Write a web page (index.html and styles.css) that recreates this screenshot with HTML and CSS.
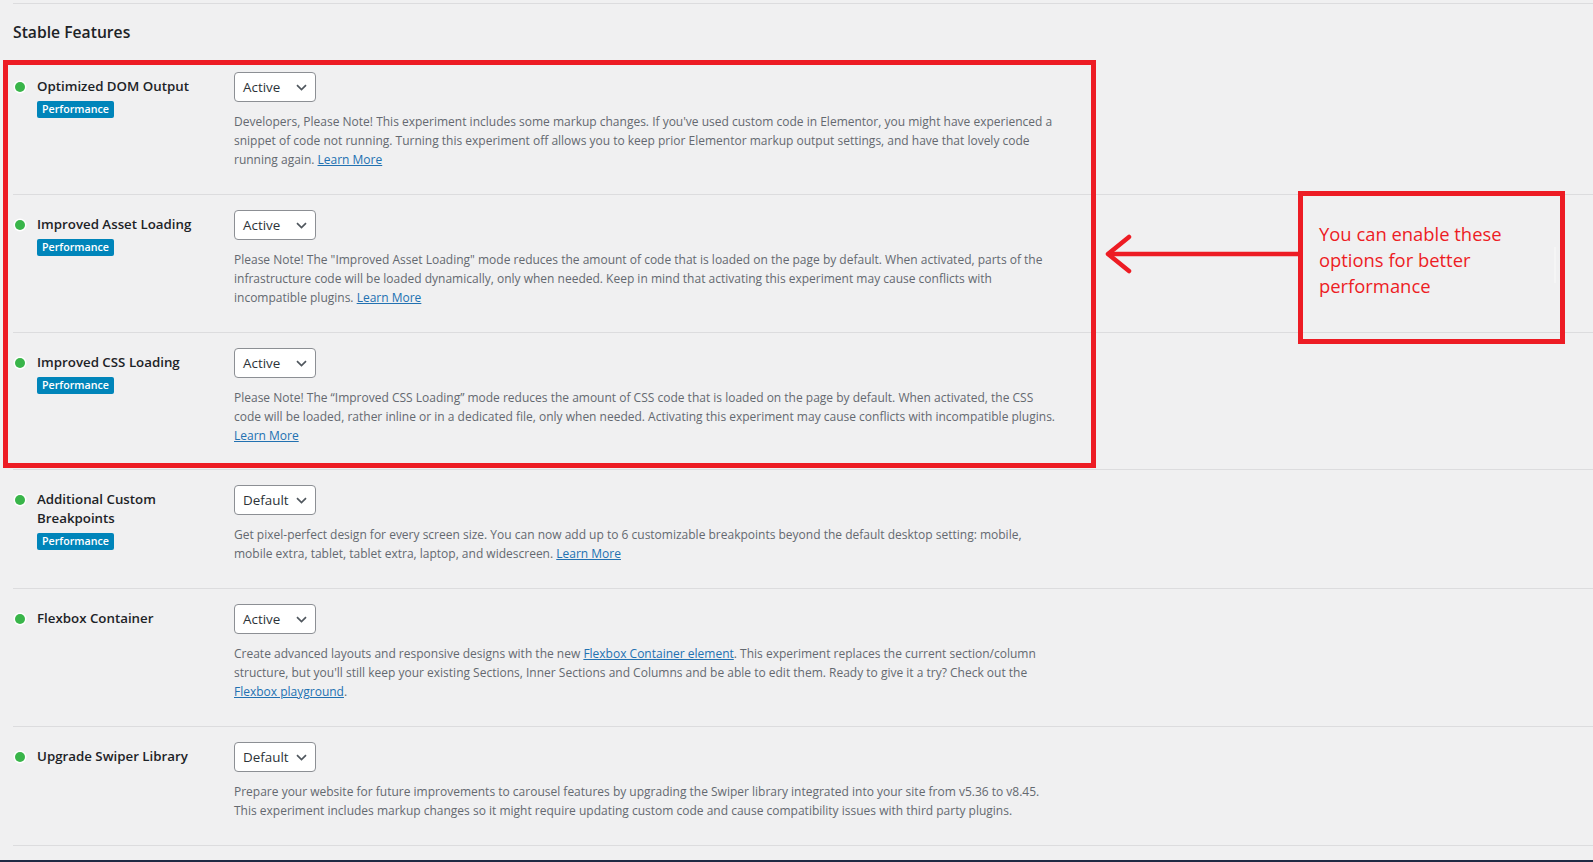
FILE: index.html
```html
<!DOCTYPE html>
<html lang="en">
<head>
<meta charset="utf-8">
<title>Stable Features</title>
<link rel="stylesheet" href="styles.css">
</head>
<body>
<div class="page">
  <div class="top-rule"></div>
  <h2 class="section-title">Stable Features</h2>

  <div class="features">
    <div class="feature">
      <div class="feature-label">
        <span class="dot"></span>
        <div class="label-text">
          <div class="name">Optimized DOM Output</div>
          <span class="tag">Performance</span>
        </div>
      </div>
      <div class="feature-control">
        <div class="select"><span class="select-value">Active</span><svg class="chev" width="11" height="7" viewBox="0 0 11 7"><path d="M1 1.2 L5.5 5.5 L10 1.2" fill="none" stroke="#50575e" stroke-width="1.7"/></svg></div>
        <p class="desc">Developers, Please Note! This experiment includes some markup changes. If you've used custom code in Elementor, you might have experienced a<br>snippet of code not running. Turning this experiment off allows you to keep prior Elementor markup output settings, and have that lovely code<br>running again. <a href="#">Learn More</a></p>
      </div>
    </div>

    <div class="feature">
      <div class="feature-label">
        <span class="dot"></span>
        <div class="label-text">
          <div class="name">Improved Asset Loading</div>
          <span class="tag">Performance</span>
        </div>
      </div>
      <div class="feature-control">
        <div class="select"><span class="select-value">Active</span><svg class="chev" width="11" height="7" viewBox="0 0 11 7"><path d="M1 1.2 L5.5 5.5 L10 1.2" fill="none" stroke="#50575e" stroke-width="1.7"/></svg></div>
        <p class="desc">Please Note! The "Improved Asset Loading" mode reduces the amount of code that is loaded on the page by default. When activated, parts of the<br>infrastructure code will be loaded dynamically, only when needed. Keep in mind that activating this experiment may cause conflicts with<br>incompatible plugins. <a href="#">Learn More</a></p>
      </div>
    </div>

    <div class="feature feature-tight">
      <div class="feature-label">
        <span class="dot"></span>
        <div class="label-text">
          <div class="name">Improved CSS Loading</div>
          <span class="tag">Performance</span>
        </div>
      </div>
      <div class="feature-control">
        <div class="select"><span class="select-value">Active</span><svg class="chev" width="11" height="7" viewBox="0 0 11 7"><path d="M1 1.2 L5.5 5.5 L10 1.2" fill="none" stroke="#50575e" stroke-width="1.7"/></svg></div>
        <p class="desc">Please Note! The “Improved CSS Loading” mode reduces the amount of CSS code that is loaded on the page by default. When activated, the CSS<br>code will be loaded, rather inline or in a dedicated file, only when needed. Activating this experiment may cause conflicts with incompatible plugins.<br><a href="#">Learn More</a></p>
      </div>
    </div>

    <div class="feature">
      <div class="feature-label">
        <span class="dot"></span>
        <div class="label-text">
          <div class="name">Additional Custom<br>Breakpoints</div>
          <span class="tag">Performance</span>
        </div>
      </div>
      <div class="feature-control">
        <div class="select"><span class="select-value">Default</span><svg class="chev" width="11" height="7" viewBox="0 0 11 7"><path d="M1 1.2 L5.5 5.5 L10 1.2" fill="none" stroke="#50575e" stroke-width="1.7"/></svg></div>
        <p class="desc">Get pixel-perfect design for every screen size. You can now add up to 6 customizable breakpoints beyond the default desktop setting: mobile,<br>mobile extra, tablet, tablet extra, laptop, and widescreen. <a href="#">Learn More</a></p>
      </div>
    </div>

    <div class="feature">
      <div class="feature-label">
        <span class="dot"></span>
        <div class="label-text">
          <div class="name">Flexbox Container</div>
        </div>
      </div>
      <div class="feature-control">
        <div class="select"><span class="select-value">Active</span><svg class="chev" width="11" height="7" viewBox="0 0 11 7"><path d="M1 1.2 L5.5 5.5 L10 1.2" fill="none" stroke="#50575e" stroke-width="1.7"/></svg></div>
        <p class="desc">Create advanced layouts and responsive designs with the new <a href="#">Flexbox Container element</a>. This experiment replaces the current section/column<br>structure, but you'll still keep your existing Sections, Inner Sections and Columns and be able to edit them. Ready to give it a try? Check out the<br><a href="#">Flexbox playground</a>.</p>
      </div>
    </div>

    <div class="feature">
      <div class="feature-label">
        <span class="dot"></span>
        <div class="label-text">
          <div class="name">Upgrade Swiper Library</div>
        </div>
      </div>
      <div class="feature-control">
        <div class="select"><span class="select-value">Default</span><svg class="chev" width="11" height="7" viewBox="0 0 11 7"><path d="M1 1.2 L5.5 5.5 L10 1.2" fill="none" stroke="#50575e" stroke-width="1.7"/></svg></div>
        <p class="desc">Prepare your website for future improvements to carousel features by upgrading the Swiper library integrated into your site from v5.36 to v8.45.<br>This experiment includes markup changes so it might require updating custom code and cause compatibility issues with third party plugins.</p>
      </div>
    </div>
  </div>
</div>
<div class="bottom-bar"></div>

<div class="annot-frame"></div>
<svg class="annot-arrow" width="200" height="50" viewBox="0 0 200 50">
  <path d="M8 24 H200" stroke="#ed1c24" stroke-width="4.5" fill="none"/>
  <path d="M29 7 L8 24 L29 41" stroke="#ed1c24" stroke-width="4.5" fill="none" stroke-linecap="round" stroke-linejoin="round"/>
</svg>
<div class="callout">You can enable these<br>options for better<br>performance</div>
<div class="caret"></div>
</body>
</html>
```

FILE: styles.css
```css
* { box-sizing: border-box; }

html, body {
  margin: 0;
  padding: 0;
}

body {
  background: #f0f0f1;
  font-family: "Open Sans", "Noto Sans", sans-serif;
  color: #1d2327;
  min-height: 862px;
  position: relative;
}

.page {
  padding-left: 13px;
}

.top-rule {
  margin-top: 3px;
  border-top: 1px solid #dcdcde;
}

.section-title {
  margin: 17px 0 14px;
  font-size: 15.7px;
  line-height: 22px;
  font-weight: 600;
  color: #1d2327;
}

.feature {
  display: flex;
  border-bottom: 1px solid #dcdcde;
  padding: 15px 0 25px;
}

.feature-tight {
  padding-bottom: 24px;
}

.feature-label {
  flex: 0 0 221px;
  display: flex;
  align-items: flex-start;
  gap: 12px;
  padding-top: 5px;
}

.dot {
  flex: 0 0 10px;
  width: 10px;
  height: 10px;
  margin-top: 4.5px;
  margin-left: 2px;
  border-radius: 50%;
  background: #39b54a;
  box-shadow: 0 0 0 1.5px #fff;
}

.label-text {
  display: flex;
  flex-direction: column;
  align-items: flex-start;
}

.name {
  font-size: 13.3px;
  line-height: 19px;
  font-weight: 600;
  color: #1d2327;
}

.tag {
  margin-top: 4.5px;
  background: #0085ba;
  color: #fff;
  font-size: 10.7px;
  font-weight: 600;
  line-height: 17px;
  padding: 0 5px;
  border-radius: 2px;
}

.feature-control {
  flex: 1;
}

.select {
  width: 82px;
  height: 30px;
  background: #fff;
  border: 1px solid #8c8f94;
  border-radius: 4px;
  display: flex;
  align-items: center;
  justify-content: space-between;
  padding: 0 8px 0 8px;
  font-size: 13.4px;
  color: #2c3338;
}

.chev {
  display: block;
}

.desc {
  margin: 10px 0 0;
  font-size: 12px;
  line-height: 19px;
  color: #646970;
  white-space: nowrap;
}

.desc a {
  color: #2271b1;
  text-decoration: underline;
}

.bottom-bar {
  margin-top: 14px;
  height: 2px;
  background: #1f2a44;
}

.annot-frame {
  position: absolute;
  left: 3px;
  top: 60px;
  width: 1093px;
  height: 408px;
  border: 5px solid #ed1c24;
}

.annot-arrow {
  position: absolute;
  left: 1100px;
  top: 230px;
}

.callout {
  position: absolute;
  left: 1298px;
  top: 191px;
  width: 267px;
  height: 153px;
  border: 5px solid #ed1c24;
  padding: 25px 0 0 16px;
  font-size: 18.4px;
  line-height: 26px;
  color: #ed1c24;
}

.caret {
  position: absolute;
  left: 1554px;
  top: 247px;
  width: 2px;
  height: 36px;
  background: #f5f5f5;
}
```
